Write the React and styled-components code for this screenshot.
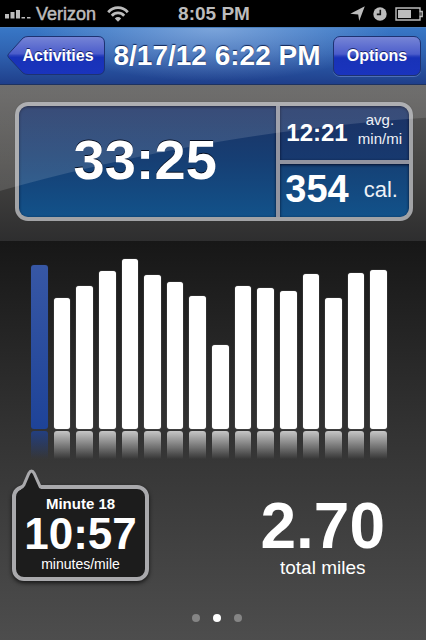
import React from 'react';
import styled, { createGlobalStyle } from 'styled-components';

const GlobalStyle = createGlobalStyle`
  * { box-sizing: border-box; }
  body { margin: 0; background: #000; }
  button { font: inherit; }
`;

const Screen = styled.div`
  min-height: 100vh;
  display: flex;
  flex-direction: column;
  background: #4d4d4d;
  color: #fff;
  font-family: "Liberation Sans", Arial, Helvetica, sans-serif;
`;

const StatusBar = styled.header`
  display: grid;
  grid-template-columns: 1fr auto 1fr;
  align-items: center;
  height: 27px;
  padding: 0 3px 0 5px;
  background: #000;
  color: #bcbcbc;
`;

const StatusGroup = styled.div`
  display: flex;
  align-items: center;
  justify-content: ${(p) => (p.$end ? 'flex-end' : 'flex-start')};
  gap: ${(p) => (p.$end ? 8 : 5)}px;
  svg { display: block; flex: none; }
`;

const Carrier = styled.span`
  font-size: 18px;
  line-height: 20px;
  -webkit-text-stroke: 0.5px currentColor;
  margin-right: 6px;
`;

const Clock = styled.time`
  font-size: 19px;
  font-weight: bold;
  line-height: 20px;
`;

const NavBar = styled.nav`
  display: flex;
  align-items: center;
  justify-content: space-between;
  height: 58px;
  padding: 0 5px 0 7px;
  border-top: 1px solid #4a7fbd;
  border-bottom: 1px solid #1d3260;
  background:
    radial-gradient(ellipse 42% 95% at 50% 0%, rgba(190, 210, 240, 0.5), rgba(190, 210, 240, 0)),
    linear-gradient(#3877c6, #2f62b0 45%, #1f3f8b);
`;

const Title = styled.h1`
  flex: 1;
  margin: 0;
  padding-right: 4px;
  font-size: 28px;
  line-height: 32px;
  text-align: center;
  white-space: nowrap;
  text-shadow: 0 -1px 1px rgba(0, 15, 60, 0.8);
`;

const NavButton = styled.button`
  position: relative;
  isolation: isolate;
  flex: none;
  height: 40px;
  min-width: ${(p) => (p.$back ? 98 : 88)}px;
  padding: ${(p) => (p.$back ? '0 10px 0 14px' : '0')};
  border: ${(p) => (p.$back ? 'none' : '1px solid #1d3272')};
  border-radius: 7px;
  background: ${(p) =>
    p.$back
      ? 'none'
      : 'linear-gradient(#7685d6, #4c5dcb 45%, #2b42be 50%, #1832b8 55%, #1a34bd)'};
  box-shadow: ${(p) => (p.$back ? 'none' : '0 1px 0 rgba(120, 150, 220, 0.5)')};
  color: #fff;
  font-size: 16px;
  font-weight: bold;
  line-height: 20px;
  text-shadow: 0 -1px 0 rgba(0, 10, 60, 0.7);
`;

const ButtonShape = styled.svg`
  position: absolute;
  inset: 0;
  z-index: -1;
  width: 100%;
  height: 100%;
`;

const Summary = styled.section`
  position: relative;
  padding: 17px 13px 20px 15px;
  background: linear-gradient(#5a5958, #464543 50%, #2e2e2f);

  &::after {
    content: '';
    position: absolute;
    inset: 0;
    pointer-events: none;
    background: radial-gradient(
      circle 2050px at 558px 2078px,
      transparent 2049px,
      rgba(255, 255, 255, 0.13) 2050px
    );
  }
`;

const SummaryPanel = styled.div`
  display: grid;
  grid-template-columns: 2fr 1fr;
  grid-template-rows: 1fr 1fr;
  gap: 4px;
  min-height: 119px;
  border: 4px solid #a2a3a6;
  border-radius: 13px;
  background: #9294a0;
  overflow: hidden;
  box-shadow: 0 0 1px #333;
`;

const cellStyles = {
  time: {
    fill: 'linear-gradient(#1c3264, #163f74 50%, #12528a)',
    padding: '0 5px 4px 0',
    radius: '8px 0 0 8px',
  },
  pace: {
    fill: 'linear-gradient(#1c3264, #17396f)',
    padding: '0 7px 0 6px',
    radius: '0 8px 0 0',
  },
  calories: {
    fill: 'linear-gradient(#154176, #12528a)',
    padding: '0 11px 2px 5px',
    radius: '0 0 8px 0',
  },
};

const Cell = styled.div`
  display: flex;
  align-items: center;
  justify-content: ${(p) => (p.$kind === 'time' ? 'center' : 'space-between')};
  grid-row: ${(p) => (p.$kind === 'time' ? 'span 2' : 'auto')};
  padding: ${(p) => cellStyles[p.$kind].padding};
  border-radius: ${(p) => cellStyles[p.$kind].radius};
  background: ${(p) => cellStyles[p.$kind].fill};
  box-shadow: inset 0 1px 3px rgba(0, 0, 20, 0.8);
`;

const Value = styled.span`
  position: relative;
  z-index: 1;
  font-size: ${(p) => p.$size}px;
  line-height: ${(p) => p.$size}px;
  font-weight: bold;
  text-shadow: ${(p) => (p.$raised ? '0 -1px 0 rgba(0, 5, 20, 0.9)' : 'none')};
`;

const Unit = styled.span`
  position: relative;
  z-index: 1;
  padding-bottom: ${(p) => (p.$stacked ? 8 : 0)}px;
  color: #eef1f6;
  font-size: ${(p) => (p.$stacked ? 15 : 22)}px;
  line-height: 19px;
  text-align: center;
`;

const Details = styled.main`
  flex: 1;
  display: flex;
  flex-direction: column;
  background: linear-gradient(#171717, #343434 50%, #4d4d4d);
`;

const Chart = styled.div`
  padding: 18px 39px 0 31px;
`;

const BarRow = styled.div`
  display: flex;
  align-items: flex-end;
  gap: 6px;
  height: ${(p) => p.$height}px;
  margin-bottom: 2px;
`;

const Bar = styled.div`
  flex: 1;
  border-radius: 3px;
  background: ${(p) => (p.$active ? 'linear-gradient(#3757a5, #1e4398)' : '#fff')};
  box-shadow: 0 0 1px ${(p) => (p.$active ? '#1c3570' : '#bbb')};
`;

const Reflection = styled.div`
  flex: 1;
  height: 28px;
  border-radius: 3px 3px 0 0;
  background: ${(p) =>
    p.$active
      ? 'linear-gradient(rgba(31, 66, 148, 0.8), rgba(31, 66, 148, 0))'
      : 'linear-gradient(rgba(255, 255, 255, 0.72), rgba(255, 255, 255, 0))'};
`;

const Figures = styled.div`
  display: flex;
  justify-content: space-between;
  align-items: flex-start;
  padding: 24px 41px 0 12px;
`;

const Callout = styled.div`
  position: relative;
  display: flex;
  flex-direction: column;
  align-items: center;
  width: 137px;
  padding: 7px 0 4px;
  border: 4px solid #a9a9ac;
  border-radius: 12px;
  background: #1c1c1c;
  box-shadow: 0 2px 4px rgba(0, 0, 0, 0.7);
`;

const Pointer = styled.svg`
  position: absolute;
  left: 2px;
  top: -20px;
`;

const Label = styled.span`
  font-size: ${(p) => (p.$bold ? 15 : 14)}px;
  line-height: ${(p) => (p.$bold ? 16 : 17)}px;
  font-weight: ${(p) => (p.$bold ? 'bold' : 'normal')};
`;

const Total = styled.div`
  display: flex;
  flex-direction: column;
  align-items: center;
  padding-top: 9px;
  font-size: 19px;
  line-height: 20px;
`;

const Pager = styled.div`
  display: flex;
  justify-content: center;
  gap: 13px;
  margin-top: auto;
  padding: 0 0 18px 8px;
`;

const Dot = styled.button`
  width: 8px;
  height: 8px;
  padding: 0;
  border: none;
  border-radius: 50%;
  background: ${(p) => (p.$current ? '#fff' : '#858585')};
`;

const CHART_HEIGHT = 170;
const minutes = [164, 131, 143, 158, 170, 154, 147, 133, 84, 143, 141, 138, 155, 131, 156, 159];

const SignalIcon = () => (
  <svg width="26" height="10" viewBox="0 0 26 10" fill="#bcbcbc" aria-hidden="true">
    <rect x="0" y="5" width="4" height="4.5" />
    <rect x="5.500" y="3" width="4" height="6.500" />
    <rect x="11" y="1" width="4" height="8.500" />
    <rect x="16.500" y="8" width="3.500" height="1.500" />
    <rect x="22" y="8" width="3.500" height="1.500" />
  </svg>
);

const WifiIcon = () => (
  <svg width="22" height="16" viewBox="0 0 22 16" aria-hidden="true">
    <g fill="none" stroke="#bcbcbc" strokeWidth="2.8">
      <path d="M1.2 6.2C6.8 .1 15.2 .1 20.8 6.2" />
      <path d="M4.8 9.8C8.3 6 13.700 6 17.200 9.800" />
    </g>
    <path d="M11 15.8L7.8 12.400C9.600 10.600 12.400 10.600 14.200 12.400Z" fill="#bcbcbc" />
  </svg>
);

const LocationIcon = () => (
  <svg width="15" height="15" viewBox="0 0 15 15" aria-hidden="true">
    <path d="M14.800 .2L9.200 14.900L8.200 8.600L.3 7.800Z" fill="#bcbcbc" />
  </svg>
);

const AlarmIcon = () => (
  <svg width="14" height="14" viewBox="0 0 14 14" aria-hidden="true">
    <circle cx="7" cy="7" r="6.7" fill="#bcbcbc" />
    <path d="M7.300 2.800V7.400H3.800" fill="none" stroke="#111" strokeWidth="1.6" />
  </svg>
);

const BatteryIcon = () => (
  <svg width="28" height="14" viewBox="0 0 28 14" aria-hidden="true">
    <path d="M1 1H25V4.500H27.200V9.500H25V13H1Z" fill="none" stroke="#bcbcbc" strokeWidth="1.4" />
    <path d="M25 4.500V9.500" stroke="#bcbcbc" strokeWidth="1" />
    <rect x="3" y="3" width="13" height="8" fill="#bcbcbc" />
  </svg>
);

export default function App() {
  return (
    <Screen>
      <GlobalStyle />
      <StatusBar>
        <StatusGroup>
          <SignalIcon />
          <Carrier>Verizon</Carrier>
          <WifiIcon />
        </StatusGroup>
        <Clock>8:05 PM</Clock>
        <StatusGroup $end>
          <LocationIcon />
          <AlarmIcon />
          <BatteryIcon />
        </StatusGroup>
      </StatusBar>

      <NavBar>
        <NavButton type="button" $back>
          <ButtonShape viewBox="0 0 98 40" preserveAspectRatio="none" aria-hidden="true">
            <defs>
              <linearGradient id="backFill" x1="0" y1="0" x2="0" y2="1">
                <stop offset="0" stopColor="#7685d6" />
                <stop offset="0.45" stopColor="#4c5dcb" />
                <stop offset="0.5" stopColor="#2b42be" />
                <stop offset="0.55" stopColor="#1832b8" />
                <stop offset="1" stopColor="#1a34bd" />
              </linearGradient>
            </defs>
            <path
              d="M16 2Q18 .5 21 .5H91Q97.500 .5 97.500 7V32Q97.500 38.500 91 38.500H21Q18 38.500 16 37L1.500 21.500Q0 19.500 1.500 18Z"
              fill="url(#backFill)"
              stroke="#1d3272"
            />
          </ButtonShape>
          Activities
        </NavButton>
        <Title>8/17/12 6:22 PM</Title>
        <NavButton type="button">Options</NavButton>
      </NavBar>

      <Summary>
        <SummaryPanel>
          <Cell $kind="time">
            <Value $size={56} $raised>33:25</Value>
          </Cell>
          <Cell $kind="pace">
            <Value $size={24}>12:21</Value>
            <Unit $stacked>avg.<br />min/mi</Unit>
          </Cell>
          <Cell $kind="calories">
            <Value $size={38}>354</Value>
            <Unit>cal.</Unit>
          </Cell>
        </SummaryPanel>
      </Summary>

      <Details>
        <Chart role="img" aria-label="Pace by minute">
          <BarRow $height={CHART_HEIGHT}>
            {minutes.map((height, i) => (
              <Bar key={i} $active={i === 0} style={{ height: `${(height / CHART_HEIGHT) * 100}%` }} />
            ))}
          </BarRow>
          <BarRow $height={28}>
            {minutes.map((_, i) => (
              <Reflection key={i} $active={i === 0} />
            ))}
          </BarRow>
        </Chart>

        <Figures>
          <Callout>
            <Pointer width="26" height="22" viewBox="0 0 26 22" aria-hidden="true">
              <path d="M5 17L11 4H16L22.500 17V22H3V19Z" fill="#1c1c1c" />
              <path
                d="M1.500 19.500C4 18.500 4.800 18 5.800 16L10.800 4.500Q13.500 -.5 16.200 4.500L22.200 17.800H26"
                fill="none"
                stroke="#a9a9ac"
                strokeWidth="3"
              />
            </Pointer>
            <Label $bold>Minute 18</Label>
            <Value $size={44}>10:57</Value>
            <Label>minutes/mile</Label>
          </Callout>
          <Total>
            <Value $size={64}>2.70</Value>
            total miles
          </Total>
        </Figures>

        <Pager>
          <Dot type="button" aria-label="Page 1" />
          <Dot type="button" aria-label="Page 2" $current />
          <Dot type="button" aria-label="Page 3" />
        </Pager>
      </Details>
    </Screen>
  );
}
